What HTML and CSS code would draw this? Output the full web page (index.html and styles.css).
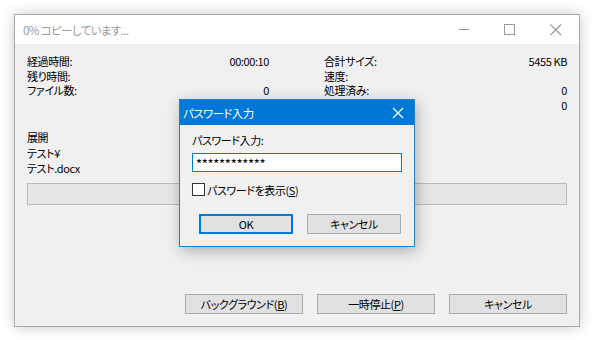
FILE: index.html
```html
<!DOCTYPE html>
<html lang="ja">
<head>
<meta charset="utf-8">
<title>コピー</title>
<link rel="stylesheet" href="styles.css">
</head>
<body>
<div class="window">
  <div class="titlebar">
    <span class="title">0% コピーしています...</span>
    <div class="controls">
      <svg class="ctl" width="46" height="29" viewBox="0 0 46 29"><line x1="18" y1="15.5" x2="28" y2="15.5" stroke="#999" stroke-width="1"/></svg>
      <svg class="ctl" width="46" height="29" viewBox="0 0 46 29"><rect x="17.5" y="10.5" width="10" height="10" fill="none" stroke="#999" stroke-width="1"/></svg>
      <svg class="ctl" width="46" height="29" viewBox="0 0 46 29"><path d="M17.5 10.5 L28 21 M28 10.5 L17.5 21" stroke="#999" stroke-width="1.1" fill="none"/></svg>
    </div>
  </div>
  <div class="content">
    <div class="stats">
      <div class="stat"><span>経過時間:</span><span>00:00:10</span></div>
      <div class="stat"><span>合計サイズ:</span><span>5455 KB</span></div>
      <div class="stat"><span>残り時間:</span><span></span></div>
      <div class="stat"><span>速度:</span><span></span></div>
      <div class="stat"><span>ファイル数:</span><span>0</span></div>
      <div class="stat"><span>処理済み:</span><span>0</span></div>
      <div class="stat"><span></span><span></span></div>
      <div class="stat"><span></span><span>0</span></div>
    </div>
    <div class="op">展開</div>
    <div class="paths">
      <div>テスト¥</div>
      <div>テスト.docx</div>
    </div>
    <div class="progress"></div>
    <div class="buttons">
      <button class="btn">バックグラウンド(<u>B</u>)</button>
      <button class="btn">一時停止(<u>P</u>)</button>
      <button class="btn">キャンセル</button>
    </div>
  </div>
</div>

<div class="dialog">
  <div class="dlg-title">
    <span>パスワード入力</span>
    <svg width="12" height="12" viewBox="0 0 12 12" class="dlg-close"><path d="M1 1 L11 11 M11 1 L1 11" stroke="#fff" stroke-width="1.2" fill="none"/></svg>
  </div>
  <div class="dlg-body">
    <div class="dlg-label">パスワード入力:</div>
    <div class="dlg-input">************</div>
    <label class="dlg-check"><span class="box"></span><span>パスワードを表示(<u>S</u>)</span></label>
    <div class="dlg-buttons">
      <button class="btn dbtn default">OK</button>
      <button class="btn dbtn">キャンセル</button>
    </div>
  </div>
</div>
</body>
</html>
```

FILE: styles.css
```css
* { box-sizing: border-box; }
html, body { margin: 0; padding: 0; }
body {
  width: 594px;
  height: 340px;
  background: #ffffff;
  font-family: "Noto Sans CJK JP", "Noto Sans", sans-serif;
  font-size: 11px;
  letter-spacing: -0.4px;
  font-feature-settings: "palt";
  color: #000;
  position: relative;
  overflow: hidden;
  padding: 14px 0 0 14px;
}
.window {
  width: 566px;
  height: 313px;
  border: 1px solid #a9a9a9;
  background: #f0f0f0;
  box-shadow: 0 0 12px rgba(0,0,0,0.22);
  display: flex;
  flex-direction: column;
}
.titlebar {
  height: 29px;
  background: #fff;
  display: flex;
  align-items: center;
  justify-content: space-between;
  flex: none;
}
.title {
  padding-left: 8px;
  color: #9a9a9a;
  font-size: 11.5px;
  letter-spacing: -0.6px;
  line-height: 29px;
  padding-top: 1px;
}
.controls { display: flex; align-items: flex-start; height: 29px; }
.ctl { display: block; margin-top: -1px; }
.content {
  flex: 1;
  display: flex;
  flex-direction: column;
  padding: 10px 12px 12px 12px;
}
.stats {
  display: grid;
  grid-template-columns: 242px 243px;
  column-gap: 55px;
  line-height: 14.7px;
}
.stat { display: flex; justify-content: space-between; height: 14.7px; }
.stat span { white-space: nowrap; }
.op { margin-top: 17px; line-height: 14px; }
.paths { margin-top: 2px; line-height: 15px; }
.progress {
  margin-top: 7px;
  height: 22px;
  border: 1px solid #bcbcbc;
  background: #e6e6e6;
}
.buttons {
  margin-top: auto;
  display: flex;
  justify-content: flex-end;
  gap: 14px;
}
.btn {
  width: 118px;
  height: 20px;
  border: 1px solid #adadad;
  background: #e1e1e1;
  font-family: "Noto Sans CJK JP", "Noto Sans", sans-serif;
  font-size: 11px;
  letter-spacing: -0.4px;
  font-feature-settings: "palt";
  color: #000;
  padding: 0;
  line-height: 16px;
}
.btn u { text-underline-offset: 1px; }

.dialog {
  position: absolute;
  left: 179px;
  top: 99px;
  width: 236px;
  height: 148px;
  border: 1px solid #1883d7;
  background: #f0f0f0;
  box-shadow: 2px 4px 14px rgba(0,0,0,0.28);
}
.dlg-title {
  height: 25px;
  background: #0078d7;
  color: #fff;
  display: flex;
  align-items: center;
  justify-content: space-between;
  padding: 0 10px 0 3px;
  font-size: 11.5px;
  letter-spacing: -0.6px;
}
.dlg-close { display: block; margin-top: 1px; }
.dlg-body { padding: 8px 12px 0 12px; }
.dlg-label { line-height: 14px; }
.dlg-input {
  margin-top: 6px;
  width: 210px;
  height: 19px;
  border: 1px solid #0078d7;
  background: #fff;
  padding-left: 3px;
  font-size: 13px;
  line-height: 20px;
  letter-spacing: -0.3px;
}
.dlg-check {
  margin-top: 11px;
  display: flex;
  align-items: center;
  gap: 2px;
  height: 13px;
}
.box {
  width: 13px;
  height: 13px;
  border: 1px solid #333;
  background: #fff;
  flex: none;
}
.dlg-buttons {
  margin-top: 18px;
  display: flex;
  gap: 14px;
  padding-left: 7px;
}
.dbtn { width: 94px; }
.default { border: 2px solid #0078d7; }
```
